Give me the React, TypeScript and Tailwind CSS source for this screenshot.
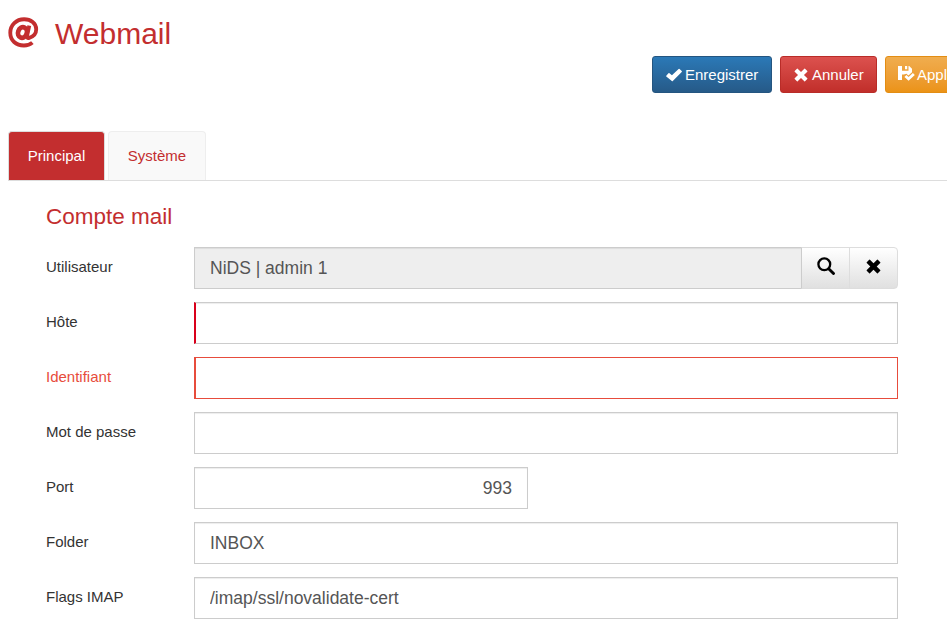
import React from "react";

const field = "h-[42px] border border-[#ccc] bg-white px-[15px] text-[17.5px] leading-[40px] text-[#555] shadow-[inset_0_1px_1px_rgba(0,0,0,0.075)]";

function Cross({ className }: { className: string }) {
  return (
    <svg viewBox="0 0 16 16" className={className} fill="currentColor">
      <path d="M4.2.8 8 4.6 11.8.8q.4-.4.8 0L15.2 3.4q.4.4 0 .8L11.4 8l3.8 3.8q.4.4 0 .8L12.6 15.2q-.4.4-.8 0L8 11.4 4.2 15.2q-.4.4-.8 0L.8 12.6q-.4-.4 0-.8L4.6 8 .8 4.2q-.4-.4 0-.8L3.4.8q.4-.4.8 0Z" />
    </svg>
  );
}

function Row({ label, error, children }: { label: string; error?: boolean; children: React.ReactNode }) {
  return (
    <div className="mb-[13px] flex h-[42px]">
      <label className={`w-[148px] shrink-0 pt-[9px] text-[15px] leading-[21px] ${error ? "text-[#e74c3c]" : "text-[#333]"}`}>{label}</label>
      {children}
    </div>
  );
}

export default function App() {
  return (
    <div className="h-[636px] w-[947px] overflow-hidden bg-white font-['Liberation_Sans',Arial,sans-serif] text-[15px]">
      <header className="flex h-[56px] text-[#c32e2f]">
        <svg viewBox="0 0 30 30" className="ml-2 mt-[17px] h-[31px] w-[31px] shrink-0" fill="none" stroke="currentColor">
          <ellipse cx="14" cy="15" rx="4.2" ry="5.2" strokeWidth="4.6" transform="rotate(20 14 15)" />
          <path d="M20.6 8.4 18.6 17.6c-.5 2.4.4 3.1 1.9 2.6 3.9-1.3 6.8-4.4 6.8-8.4C27.3 6 22 2.2 15.6 2.2 8 2.2 2.2 7.9 2.2 15.2c0 7.4 5.5 12.4 13.2 12.4 3.5 0 6-.9 8.2-2.8" strokeWidth="3.7" />
        </svg>
        <h1 className="ml-4 mt-[15px] text-[30px] leading-[37px]">Webmail</h1>
      </header>
      <div className="ml-[652px] flex w-[400px] gap-2 text-[15px] text-white">
        <button className="flex h-[37px] w-[120px] items-center rounded-[3px] border border-[#245580] bg-linear-to-b from-[#2b79b7] to-[#265a88] pl-[13px]">
          <svg viewBox="0 0 17 14" className="mr-[3px] h-[14px] w-[16px] shrink-0" fill="currentColor"><path d="M.3 7.7 2.6 5.2q.5-.5 1.1 0l2.6 2L13.4.5q.5-.4 1 0L16.7 2.7q.4.5 0 1L7.2 13.4q-.5.4-1 0L.3 8.6q-.4-.4 0-.9Z" /></svg>
          <span className="pt-[2px]">Enregistrer</span>
        </button>
        <button className="flex h-[37px] w-[97px] items-center rounded-[3px] border border-[#b92c28] bg-linear-to-b from-[#dc514e] to-[#c12e2a] pl-[13px]">
          <Cross className="mr-[4px] h-[14px] w-[14px] shrink-0" /><span className="pt-[2px]">Annuler</span>
        </button>
        <button className="flex h-[37px] w-[105px] items-center rounded-[3px] border border-[#e38d13] bg-linear-to-b from-[#f0ad4e] to-[#eb9316] pl-[12px]">
          <svg viewBox="0 0 17 15" className="mr-[2px] mb-[2px] h-[15px] w-[17px] shrink-0" fill="currentColor">
            <path fillRule="evenodd" d="M0 0h4v4.8h6.5V0h.7l2.8 2.8v3.4L10.4 9.6 8.5 7.8 5.8 8.6H4V14H0Zm7 0h2.2v3.2H7Z" />
            <path d="m6.4 10.9 2-1.9 2.2 2.1 4.3-4.1 1.9 1.9-6.2 5.9Z" />
          </svg>
          <span className="pt-[2px]">Appliquer</span>
        </button>
      </div>
      <nav className="mt-[38px] ml-2 flex h-[50px] items-end border-b border-[#ddd]">
        <div className="mr-[3px] h-[49px] w-[97px] rounded-t-[4px] border border-b-0 border-[#ddd] bg-[#c32e2f] pt-[13px] text-center leading-[21px] text-white">Principal</div>
        <div className="h-[49px] w-[98px] rounded-t-[4px] border border-b-0 border-[#eee] bg-[#f9f9f9] pt-[13px] text-center leading-[21px] text-[#c32e2f]">Système</div>
      </nav>
      <main className="ml-[46px] w-[852px] pt-[22px]">
        <h2 className="mb-[16px] text-[22.5px] leading-[28px] text-[#c32e2f]">Compte mail</h2>
        <Row label="Utilisateur">
          <div className={`${field} w-[608px] bg-[#eee]!`}>NiDS | admin 1</div>
          <button className="-ml-px flex h-[42px] w-[49px] justify-center border border-[#ddd] border-l-[#ccc] bg-linear-to-b from-white to-[#e0e0e0] pt-[9px] text-black">
            <svg viewBox="0 0 18 18" className="h-[18px] w-[18px]" fill="none" stroke="currentColor"><circle cx="7.3" cy="7.3" r="5.9" strokeWidth="2.3" /><path d="m11.7 11.7 4.8 4.8" strokeWidth="2.9" strokeLinecap="round" /></svg>
          </button>
          <button className="-ml-px flex h-[42px] w-[49px] justify-center rounded-r-[4px] border border-[#ddd] bg-linear-to-b from-white to-[#e0e0e0] pt-[11px] text-black"><Cross className="h-[15px] w-[15px]" /></button>
        </Row>
        <Row label="Hôte"><input className={`${field} w-[704px] border-l-2 border-l-[#d9001b]`} /></Row>
        <Row label="Identifiant" error><input className="h-[42px] w-[704px] border border-l-2 border-[#e74c3c]" /></Row>
        <Row label="Mot de passe"><input type="password" className={`${field} w-[704px]`} /></Row>
        <Row label="Port"><input className={`${field} w-[334px] text-right`} defaultValue="993" /></Row>
        <Row label="Folder"><input className={`${field} w-[704px]`} defaultValue="INBOX" /></Row>
        <Row label="Flags IMAP"><input className={`${field} w-[704px]`} defaultValue="/imap/ssl/novalidate-cert" /></Row>
      </main>
    </div>
  );
}
